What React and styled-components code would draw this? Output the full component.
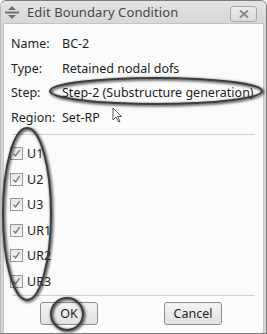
import styled, { createGlobalStyle } from "styled-components";

const Global = createGlobalStyle`
    html, body { margin: 0; padding: 0; background: #ffffff; }
    body { font-family: "Noto Sans", "Open Sans", sans-serif; color: #1e1e1e; }
`;

const Window = styled.div`
    position: relative;
    width: 267px;
    height: 334px;
    box-sizing: border-box;
    display: flex;
    flex-direction: column;
    background: #d6d6d6;
    border: 1px solid #7c7c7c;
    border-left-color: #b8b8b8;
    border-radius: 6px 6px 0 0;
    overflow: hidden;
`;

const TitleBar = styled.div`
    height: 22px;
    flex-shrink: 0;
    display: flex;
    align-items: center;
    padding: 0 9px 0 4px;
    background: linear-gradient(#e4e4e4, #d8d8d8);
    font-size: 13px;
    color: #484848;
`;

const Title = styled.span`
    flex: 1;
    margin-left: 8px;
    letter-spacing: 0.1px;
`;

const CloseButton = styled.div`
    width: 25px;
    height: 14px;
    border: 1px solid #a8a8a8;
    border-radius: 3px;
    background: linear-gradient(#ececec, #dadada);
    display: flex;
    align-items: center;
    justify-content: center;
    margin-top: 4px;
`;

const Body = styled.div`
    flex: 1;
    margin: 0 2px 0 2px;
    background: #fbfbfb;
    border: 1px solid #c4c4c4;
    border-bottom: none;
    padding: 7px 6px 0 6px;
    display: flex;
    flex-direction: column;
    font-size: 12.5px;
`;

const InfoRow = styled.div`
    height: 24.7px;
    display: flex;
    align-items: center;
    padding-left: 1px;
`;

const Label = styled.span`
    width: 51px;
`;

const Separator = styled.div`
    height: 1px;
    background: #cfcfcf;
    margin: ${(p) => p.$m};
`;

const CheckRow = styled.label`
    height: 25.6px;
    display: flex;
    align-items: center;
    gap: 4px;
`;

const Box = styled.span`
    width: 11px;
    height: 11px;
    border: 1px solid #9a9a9a;
    background: linear-gradient(#e6e6e6, #f6f6f6);
    display: flex;
    align-items: center;
    justify-content: center;
`;

const ButtonRow = styled.div`
    display: flex;
    justify-content: space-between;
    padding: 0 35px 0 30px;
    margin-top: 6px;
`;

const Button = styled.div`
    width: 56px;
    height: 21px;
    border: 1px solid #8e8e8e;
    border-radius: 3px;
    background: linear-gradient(#f4f4f4, #e2e2e2);
    display: flex;
    align-items: center;
    justify-content: center;
    font-size: 12.5px;
`;

const Overlay = styled.svg`
    position: absolute;
    left: -1px;
    top: -1px;
    pointer-events: none;
`;

const Cursor = styled.svg`
    margin-left: 12px;
    margin-bottom: 5px;
`;

function Check() {
    return (
        <Box>
            <svg width="9" height="9" viewBox="0 0 9 9">
                <path d="M1.5 4.8 L3.6 7 L7.6 1.2" fill="none" stroke="#7a7a7a" strokeWidth="1.4" />
            </svg>
        </Box>
    );
}

const dofs = ["U1", "U2", "U3", "UR1", "UR2", "UR3"];

export default function App() {
    return (
        <>
            <Global />
            <Window>
                <TitleBar>
                    <svg width="14" height="13" viewBox="0 0 14 13">
                        <path d="M7 0 L11 4 H3 Z" fill="#6e6e6e" />
                        <rect x="0" y="5.5" width="14" height="2" fill="#6e6e6e" />
                        <path d="M7 13 L11 9 H3 Z" fill="#6e6e6e" />
                    </svg>
                    <Title>Edit Boundary Condition</Title>
                    <CloseButton>
                        <svg width="10" height="8" viewBox="0 0 10 8">
                            <path d="M1 0.5 L9 7.5 M9 0.5 L1 7.5" stroke="#8a8a8a" strokeWidth="2" />
                        </svg>
                    </CloseButton>
                </TitleBar>
                <Body>
                    <InfoRow><Label>Name:</Label>BC-2</InfoRow>
                    <InfoRow><Label>Type:</Label>Retained nodal dofs</InfoRow>
                    <InfoRow><Label>Step:</Label>Step-2 (Substructure generation)</InfoRow>
                    <InfoRow>
                        <Label>Region:</Label>Set-RP
                        <Cursor width="11" height="16" viewBox="0 0 11 16">
                            <path d="M1 1 L1 13 L4 10 L6.5 15 L8 14.3 L5.6 9.5 L9.6 9.5 Z" fill="#fff" stroke="#555" strokeWidth="1" />
                        </Cursor>
                    </InfoRow>
                    <Separator $m="4px 2px 6px 2px" />
                    {dofs.map((d) => (
                        <CheckRow key={d}>
                            <Check />
                            {d}
                        </CheckRow>
                    ))}
                    <Separator $m="1px 2px 0 2px" />
                    <ButtonRow>
                        <Button>OK</Button>
                        <Button>Cancel</Button>
                    </ButtonRow>
                </Body>
                <Overlay width="267" height="334" viewBox="0 0 267 334">
                    <defs>
                        <filter id="soft" x="-20%" y="-20%" width="140%" height="140%">
                            <feGaussianBlur in="SourceAlpha" stdDeviation="1.5" />
                            <feOffset dx="1" dy="1" result="b" />
                            <feMerge>
                                <feMergeNode in="b" />
                                <feMergeNode in="SourceGraphic" />
                            </feMerge>
                        </filter>
                    </defs>
                    <g fill="none" stroke="#3c3c3c" strokeWidth="2" filter="url(#soft)">
                        <ellipse cx="156" cy="91" rx="106" ry="13" />
                        <ellipse cx="27" cy="214" rx="24" ry="86" />
                        <circle cx="67" cy="314" r="16" />
                    </g>
                </Overlay>
            </Window>
        </>
    );
}
